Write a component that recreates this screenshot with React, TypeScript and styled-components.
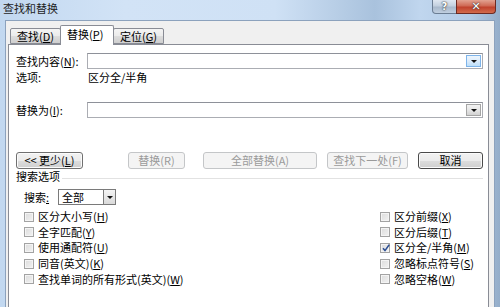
import React from 'react'
import styled, { createGlobalStyle } from 'styled-components'

const GlobalStyle = createGlobalStyle`
  html, body {
    margin: 0;
    padding: 0;
  }
  body {
    font-family: "Noto Sans CJK SC", "Liberation Sans", sans-serif;
    font-size: 11px;
    color: #000;
  }
`

const Window = styled.div`
  width: 500px;
  height: 307px;
  overflow: hidden;
  display: flex;
  flex-direction: column;
  background: linear-gradient(
    to right,
    #c2d8f0 0%,
    #d2e3f6 25%,
    #cfe1f5 55%,
    #a9c2dd 75%,
    #c0d6ee 84%,
    #b3cbe6 94%,
    #94adc9 100%
  );
`

const TitleBar = styled.div`
  height: 20px;
  flex: none;
  display: flex;
  align-items: flex-start;
`

const Title = styled.div`
  padding-left: 3px;
  line-height: 17px;
  color: #1e1e1e;
`

const CaptionButtons = styled.div`
  margin-left: auto;
  margin-right: 4px;
  display: flex;
`

const CaptionButton = styled.div<{ $close?: boolean }>`
  width: ${(p) => (p.$close ? 40 : 25)}px;
  height: 14px;
  box-sizing: border-box;
  border: 1px solid ${(p) => (p.$close ? '#6d2a22' : '#6b7d93')};
  border-top: none;
  border-radius: ${(p) => (p.$close ? '0 0 4px 0' : '0 0 0 4px')};
  margin-left: ${(p) => (p.$close ? -1 : 0)}px;
  background: ${(p) =>
    p.$close
      ? 'linear-gradient(to bottom, #e2a291 0%, #cf6a55 45%, #c0422d 55%, #d26b4c 100%)'
      : 'linear-gradient(to bottom, #dfe7f1 0%, #c3d0df 45%, #a9b9cc 55%, #c0cfe0 100%)'};
  color: #fff;
  font-family: "DejaVu Sans", sans-serif;
  font-weight: bold;
  font-size: ${(p) => (p.$close ? 11 : 10)}px;
  line-height: 13px;
  text-align: center;
  text-shadow: 0 0 2px #333, 0 0 1px #333;
`

const Client = styled.div`
  flex: 1;
  margin: 0 5px;
  background: #f0f0f0;
  border: 1px solid #8ca2bd;
  border-bottom: none;
  padding: 4px 5px 0 2px;
  display: flex;
  flex-direction: column;
`

const TabStrip = styled.div`
  display: flex;
  align-items: flex-end;
  height: 19px;
  padding-left: 2px;
  position: relative;
  z-index: 1;
`

const Tab = styled.div<{ $active?: boolean; $width: number }>`
  box-sizing: border-box;
  width: ${(p) => p.$width}px;
  height: ${(p) => (p.$active ? 20 : 16)}px;
  margin-bottom: ${(p) => (p.$active ? -1 : 0)}px;
  margin-left: -1px;
  border: 1px solid #898c95;
  border-bottom: ${(p) => (p.$active ? 'none' : '1px solid #898c95')};
  border-radius: 2px 2px 0 0;
  background: ${(p) =>
    p.$active ? '#fff' : 'linear-gradient(to bottom, #f4f4f4 0%, #ebebeb 50%, #dddddd 51%, #cfcfcf 100%)'};
  padding-left: 6px;
  line-height: ${(p) => (p.$active ? 17 : 15)}px;
  white-space: nowrap;
  &:first-child {
    margin-left: 0;
  }
`

const Panel = styled.div`
  flex: 1;
  background: #fff;
  border: 1px solid #898c95;
  border-bottom: none;
  padding: 8px 5px 0 7px;
  display: flex;
  flex-direction: column;
`

const Key = styled.span`
  text-decoration: underline;
`

const FieldRow = styled.div<{ $top: number; $height?: number }>`
  display: flex;
  align-items: center;
  height: ${(p) => p.$height ?? 16}px;
  margin-top: ${(p) => p.$top}px;
  white-space: nowrap;
`

const FieldLabel = styled.div<{ $width: number }>`
  flex: none;
  width: ${(p) => p.$width}px;
  line-height: 16px;
`

const ComboBox = styled.div`
  flex: 1;
  height: 16px;
  box-sizing: border-box;
  border: 1px solid #abadb3;
  border-top-color: #8e9199;
  background: #fff;
  display: flex;
  justify-content: flex-end;
  align-items: center;
  padding-right: 1px;
`

const DropButton = styled.div<{ $hover?: boolean }>`
  width: 15px;
  height: 12px;
  box-sizing: border-box;
  border: 1px solid ${(p) => (p.$hover ? '#7eb4ea' : '#a5a5a5')};
  background: ${(p) =>
    p.$hover
      ? 'linear-gradient(to bottom, #ecf5fd 0%, #dcecfc 50%, #bddff9 100%)'
      : 'linear-gradient(to bottom, #f2f2f2 0%, #e6e6e6 50%, #d2d2d2 100%)'};
  display: flex;
  align-items: center;
  justify-content: center;
`

const Arrow = styled.div`
  width: 0;
  height: 0;
  border-left: 3px solid transparent;
  border-right: 3px solid transparent;
  border-top: 3px solid #111;
`

const ButtonRow = styled.div`
  display: flex;
  height: 17px;
  margin-top: 34px;
`

const PushButton = styled.div<{ $width: number; $gap?: number; $disabled?: boolean; $default?: boolean }>`
  box-sizing: border-box;
  width: ${(p) => p.$width}px;
  height: 17px;
  margin-left: ${(p) => p.$gap ?? 0}px;
  border: 1px solid ${(p) => (p.$disabled ? '#c4c6c8' : p.$default ? '#4a4a4a' : '#707070')};
  border-radius: 3px;
  background: ${(p) =>
    p.$disabled
      ? '#f4f4f4'
      : 'linear-gradient(to bottom, #f2f2f2 0%, #ebebeb 50%, #dddddd 51%, #cfcfcf 100%)'};
  box-shadow: ${(p) => (p.$disabled ? 'none' : 'inset 0 0 0 1px #fbfbfb')};
  color: ${(p) => (p.$disabled ? '#9a9a9a' : '#000')};
  line-height: 15px;
  text-align: center;
  white-space: nowrap;
`

const SectionHeader = styled.div`
  display: flex;
  align-items: center;
  height: 12px;
  margin-top: 1px;
  line-height: 12px;
`

const SectionRule = styled.div`
  flex: 1;
  margin: 5px 0 0 2px;
  border-top: 1px solid #e2e2e2;
`

const SearchRow = styled.div`
  display: flex;
  align-items: center;
  height: 16px;
  margin-top: 7px;
  padding-left: 8px;
`

const Select = styled.div`
  width: 58px;
  height: 16px;
  box-sizing: border-box;
  border: 1px solid #7a7a7a;
  background: #fff;
  display: flex;
  align-items: stretch;
`

const SelectValue = styled.div`
  flex: 1;
  padding-left: 3px;
  line-height: 14px;
`

const SelectButton = styled.div`
  width: 11px;
  border-left: 1px solid #7a7a7a;
  background: linear-gradient(to bottom, #f4f4f4, #dadada);
  display: flex;
  align-items: center;
  justify-content: center;
`

const OptionGrid = styled.div`
  display: grid;
  grid-auto-flow: column;
  grid-template-rows: repeat(5, 15.6px);
  grid-template-columns: 356px auto;
  margin-top: 4px;
  padding-left: 8px;
`

const CheckItem = styled.label`
  display: flex;
  align-items: center;
  gap: 4px;
  white-space: nowrap;
  line-height: 15px;
`

const Box = styled.span`
  width: 10px;
  height: 10px;
  box-sizing: border-box;
  border: 1px solid #a3a3a3;
  background: linear-gradient(135deg, #dcdcdc 0%, #f2f2f2 100%);
  box-shadow: inset 0 0 0 1px #f4f4f4;
  position: relative;
  flex: none;
`

const Tick = styled.svg`
  position: absolute;
  left: 0;
  top: -1px;
`

type Opt = { text: string; hotkey: string; checked?: boolean }

const left: Opt[] = [
  { text: '区分大小写', hotkey: 'H' },
  { text: '全字匹配', hotkey: 'Y' },
  { text: '使用通配符', hotkey: 'U' },
  { text: '同音(英文)', hotkey: 'K' },
  { text: '查找单词的所有形式(英文)', hotkey: 'W' },
]

const right: Opt[] = [
  { text: '区分前缀', hotkey: 'X' },
  { text: '区分后缀', hotkey: 'T' },
  { text: '区分全/半角', hotkey: 'M', checked: true },
  { text: '忽略标点符号', hotkey: 'S' },
  { text: '忽略空格', hotkey: 'W' },
]

const Option = ({ text, hotkey, checked }: Opt) => (
  <CheckItem>
    <Box>
      {checked && (
        <Tick width="10" height="10" viewBox="0 0 10 10">
          <path d="M2 5.2 L4 7.6 L8.2 1.8" fill="none" stroke="#2a4d93" strokeWidth="1.5" />
        </Tick>
      )}
    </Box>
    <span>
      {text}(<Key>{hotkey}</Key>)
    </span>
  </CheckItem>
)

export default function App() {
  return (
    <>
      <GlobalStyle />
      <Window>
        <TitleBar>
          <Title>查找和替换</Title>
          <CaptionButtons>
            <CaptionButton>?</CaptionButton>
            <CaptionButton $close>✕</CaptionButton>
          </CaptionButtons>
        </TitleBar>
        <Client>
          <TabStrip>
            <Tab $width={51}>
              查找(<Key>D</Key>)
            </Tab>
            <Tab $width={54} $active>
              替换(<Key>P</Key>)
            </Tab>
            <Tab $width={51}>
              定位(<Key>G</Key>)
            </Tab>
          </TabStrip>
          <Panel>
            <FieldRow $top={0}>
              <FieldLabel $width={71}>
                查找内容(<Key>N</Key>):
              </FieldLabel>
              <ComboBox>
                <DropButton $hover>
                  <Arrow />
                </DropButton>
              </ComboBox>
            </FieldRow>
            <FieldRow $top={1} $height={14}>
              <FieldLabel $width={72}>选项:</FieldLabel>
              <span>区分全/半角</span>
            </FieldRow>
            <FieldRow $top={18}>
              <FieldLabel $width={71}>
                替换为(<Key>I</Key>):
              </FieldLabel>
              <ComboBox>
                <DropButton>
                  <Arrow />
                </DropButton>
              </ComboBox>
            </FieldRow>
            <ButtonRow>
              <PushButton $width={67}>
                {'<< 更少('}
                <Key>L</Key>)
              </PushButton>
              <PushButton $width={57} $gap={45} $disabled>
                替换(R)
              </PushButton>
              <PushButton $width={114} $gap={18} $disabled>
                全部替换(A)
              </PushButton>
              <PushButton $width={81} $gap={10} $disabled>
                查找下一处(F)
              </PushButton>
              <PushButton $width={65} $gap={10} $default>
                取消
              </PushButton>
            </ButtonRow>
            <SectionHeader>
              <span>搜索选项</span>
              <SectionRule />
            </SectionHeader>
            <SearchRow>
              <FieldLabel $width={34}>
                搜索<Key>:</Key>
              </FieldLabel>
              <Select>
                <SelectValue>全部</SelectValue>
                <SelectButton>
                  <Arrow />
                </SelectButton>
              </Select>
            </SearchRow>
            <OptionGrid>
              {left.map((o) => (
                <Option key={o.text} {...o} />
              ))}
              {right.map((o) => (
                <Option key={o.text} {...o} />
              ))}
            </OptionGrid>
          </Panel>
        </Client>
      </Window>
    </>
  )
}
